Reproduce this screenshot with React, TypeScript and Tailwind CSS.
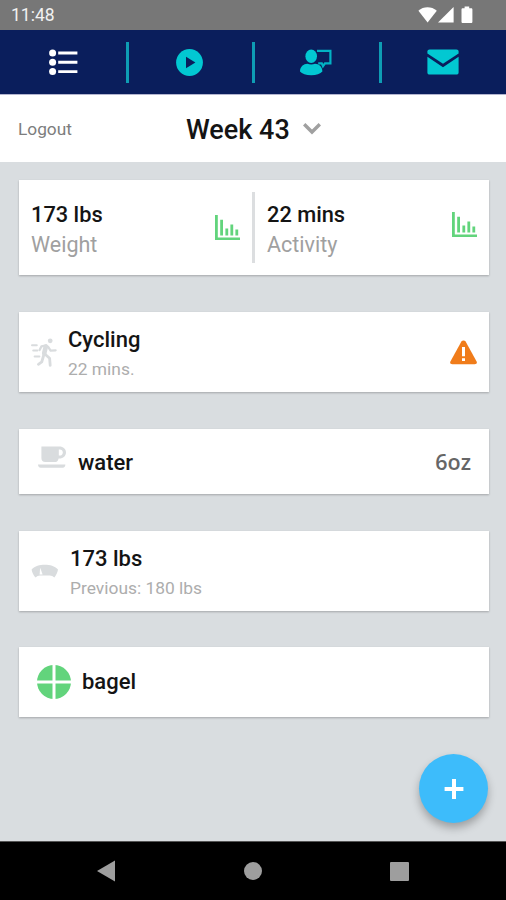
import type { ReactNode } from "react";

function BarChartIcon() {
  return (
    <svg width="26" height="26" viewBox="0 0 26 26" fill="#62d47c" aria-hidden="true">
      <path d="M0 0h2.8v22.4H25V25H0z" />
      <path d="M5.2 4.8H8V20.6H5.2zM10.4 13.4h2.8v7.2h-2.8zM15.4 9.4h2.8v11.2h-2.8zM20.4 14.4h2.8v6.2h-2.8z" />
    </svg>
  );
}

function RunnerIcon() {
  return (
    <svg width="26" height="29" viewBox="0 0 26 29" fill="none" stroke="#d9dcde" strokeWidth="2" strokeLinecap="round" strokeLinejoin="round" aria-hidden="true">
      <circle cx="19.2" cy="2.8" r="2.4" fill="#d9dcde" stroke="none" />
      <path d="M14.8 8.6l-1.6 6.8" strokeWidth="4.6" />
      <path d="M13.8 16l4.8 4.2.6 7.200" strokeWidth="2.800" />
      <path d="M12.600 17.500l-1.800 6.400-3.400 2.400" strokeWidth="2.800" />
      <path d="M15.400 7.400l-5 1-1.800 3.600M17 8.600l2.600 4 5-.2" strokeWidth="2.300" />
      <path d="M1 7.200h4.800M2.200 12.400h4.200M3.600 18.600h4.800" strokeWidth="2" />
    </svg>
  );
}

function CupIcon() {
  return (
    <svg width="29" height="23" viewBox="0 0 29 23" fill="#d9dcde" aria-hidden="true">
      <path d="M3.400.6h18c3.800 0 6.600 2.400 6.600 5.800s-2.800 6-6.600 6h-.8c-.4 2.400-1.800 3.600-4 3.600H7.400c-2.600 0-4-1.500-4-4z" />
      <path d="M20.800 3.400h.8c2 0 3.200 1.200 3.200 3s-1.200 3.200-3.200 3.200h-.8z" fill="#fff" />
      <path d="M0 18.600h27.400c0 2-1 3.200-2.600 3.200H2.600C1 21.800 0 20.600 0 18.600z" />
    </svg>
  );
}

function ScaleIcon() {
  return (
    <svg width="28" height="15" viewBox="0 0 28 15" aria-hidden="true">
      <path d="M.6 5.600C4 2 8.600.8 13.800.8S23.600 2 27 5.600c-.4 2.800-1.600 5.400-3.600 7.800-1.400-1-3-1.600-4.600-1.800H9c-1.600.2-3.200.8-4.600 1.800C2.200 11 1 8.400.6 5.600z" fill="#d9dcde" />
      <path d="M9.200 3.800l2.400 6.600H8.600z" fill="#fff" />
    </svg>
  );
}

function PieIcon() {
  return (
    <svg width="34" height="34" viewBox="0 0 34 34" aria-hidden="true">
      <circle cx="17" cy="17" r="17" fill="#62d47c" />
      <path d="M17 0v34M0 17h34" stroke="#fff" strokeWidth="3" />
    </svg>
  );
}

function WarningIcon() {
  return (
    <svg width="27" height="25" viewBox="0 0 27 25" aria-hidden="true">
      <path d="M11.400 1.500c.9-1.500 3.300-1.500 4.200 0l11 20c.8 1.500-.2 2.700-1.900 2.700h-22.400c-1.700 0-2.700-1.200-1.900-2.700z" fill="#f07c1a" />
      <path d="M12 7h3v9.200h-3zM12 18.300h3v2.800h-3z" fill="#fff" />
    </svg>
  );
}

function ListIcon() {
  return (
    <svg width="29" height="27" viewBox="0 0 29 27" fill="#fff" aria-hidden="true">
      <circle cx="3.600" cy="4" r="3.500" />
      <circle cx="3.600" cy="13.200" r="3.500" />
      <circle cx="3.600" cy="22.600" r="3.500" />
      <path d="M9.200 2.600h19.200v2.900H9.200zM9.200 11.800h19.200v2.900H9.200zM9.200 21.200h19.200v2.900H9.200z" />
    </svg>
  );
}

function PlayIcon() {
  return (
    <svg width="27" height="27" viewBox="0 0 27 27" aria-hidden="true">
      <circle cx="13.500" cy="13.500" r="13.400" fill="#02c8d2" />
      <path d="M10 7.800v11.400l9.400-5.700z" fill="#0a1e5c" />
    </svg>
  );
}

function CoachIcon() {
  return (
    <svg width="32" height="27" viewBox="0 0 32 27" fill="#02c8d2" aria-hidden="true">
      <ellipse cx="11.200" cy="7.200" rx="5.800" ry="6.800" />
      <path d="M0 22.400c0-4.600 3.600-7.600 7.400-7.600 2.400 1 5.200 1 7.600 0 3.800 0 7.400 3 7.400 7.600-2 2.400-6 3.800-11.200 3.800S2 24.800 0 22.400z" />
      <path d="M17 1.800h13.400v12.600H25l-2 2.800-1.200-2.800h-3.600" fill="none" stroke="#02b2c4" strokeWidth="2.200" />
    </svg>
  );
}

function MailIcon() {
  return (
    <svg width="32" height="26" viewBox="0 0 32 26" fill="#02c8d2" aria-hidden="true">
      <path d="M2.600.4h26.800c1.300 0 2.200.9 2.200 2.200v2L16 14.800.4 4.600v-2C.4 1.300 1.300.4 2.600.4z" />
      <path d="M.4 7.800L16 18.200 31.600 7.800v15.600c0 1.300-.9 2.200-2.200 2.200H2.600c-1.300 0-2.200-.9-2.200-2.200z" />
    </svg>
  );
}

function StatusIcons() {
  return (
    <svg width="56" height="18" viewBox="0 0 56 18" fill="#fff" aria-hidden="true">
      <path d="M.4 4.800C5.600.2 13.400.2 18.800 4.800L9.600 16.400z" />
      <path d="M35.600 1v15.600H20z" />
      <path d="M46.600.6h4.600v1.600h2c.7 0 1.200.5 1.200 1.200v12.400c0 .8-.5 1.300-1.200 1.300h-8.400c-.8 0-1.300-.5-1.300-1.300V3.400c0-.7.500-1.200 1.300-1.200h1.800z" />
    </svg>
  );
}

const tabs = [
  { label: "Log", icon: <ListIcon /> },
  { label: "Videos", icon: <PlayIcon /> },
  { label: "Coach", icon: <CoachIcon /> },
  { label: "Messages", icon: <MailIcon /> },
];

function Card({ className, children }: { className: string; children: ReactNode }) {
  return (
    <section className={`flex w-[470px] bg-white shadow-[0_1px_2px_rgba(0,0,0,0.25)] ${className}`}>{children}</section>
  );
}

function Stat({ value, label }: { value: string; label: string }) {
  return (
    <div className="flex-1">
      <p className="text-[21.8px] leading-[30px] font-medium text-[#141414]">{value}</p>
      <p className="text-[21.5px] leading-[29px] text-[#a0a0a0]">{label}</p>
    </div>
  );
}

export default function App() {
  return (
    <div className="flex h-[900px] w-[506px] flex-col overflow-hidden bg-[#d9dde0] font-[Roboto,sans-serif]">
      <div className="flex h-[30px] shrink-0 items-center justify-between bg-[#777] pr-8 pl-[11px]">
        <span className="text-[17.5px] text-[#f1f1f1]">11:48</span>
        <StatusIcons />
      </div>

      <nav className="grid h-[65px] shrink-0 grid-cols-4 border-b border-[#b3b5cf] bg-[#0a1e5c]">
        {tabs.map((tab, i) => (
          <div key={tab.label} className="flex items-center">
            <button type="button" aria-label={tab.label} className="flex flex-1 justify-center pl-px">
              {tab.icon}
            </button>
            {i < tabs.length - 1 && <span className="-mr-[2px] h-[41px] w-[3px] bg-[#0e9db4]" />}
          </div>
        ))}
      </nav>

      <header className="flex h-[67px] shrink-0 items-center bg-white pl-[18px]">
        <button type="button" className="w-[168px] pt-0.5 text-left text-[17.3px] text-[#7d7d7d]">
          Logout
        </button>
        <h1 className="w-[117px] pt-1 text-[27px] font-medium text-[#141414]">Week 43</h1>
        <svg width="18" height="12" viewBox="0 0 18 12" fill="none" stroke="#a0a0a0" strokeWidth="3.400" aria-hidden="true">
          <path d="M1.200 1.300L9 9l7.800-7.700" />
        </svg>
      </header>

      <main className="flex flex-1 flex-col pt-[18px] pl-[19px]">
        <Card className="h-[95px] items-center">
          <div className="flex w-[233px] items-center pt-[3px] pr-[11px] pl-3">
            <Stat value="173 lbs" label="Weight" />
            <div className="pb-[3px]">
              <BarChartIcon />
            </div>
          </div>
          <span className="h-[71px] w-[3px] bg-[#dcdee0]" />
          <div className="flex flex-1 items-center pt-[3px] pr-[11px] pl-3">
            <Stat value="22 mins" label="Activity" />
            <div className="pb-[8px]">
              <BarChartIcon />
            </div>
          </div>
        </Card>

        <Card className="mt-[37px] h-[80px] items-center pr-3 pl-3">
          <RunnerIcon />
          <div className="ml-[11px] flex-1 pt-1">
            <p className="text-[22px] leading-[30px] font-medium text-[#141414]">Cycling</p>
            <p className="text-[17.4px] leading-7 text-[#adadad]">22 mins.</p>
          </div>
          <WarningIcon />
        </Card>

        <Card className="mt-[37px] h-[65px] items-center pr-[18px] pl-[19px]">
          <div className="pb-2">
            <CupIcon />
          </div>
          <p className="ml-[11px] flex-1 pt-0.5 text-[22px] font-medium text-[#141414]">water</p>
          <span
            className="pt-0.5 font-[family-name:'Open_Sans',sans-serif] text-[21.5px] font-semibold text-[#666]"
          >
            6oz
          </span>
        </Card>

        <Card className="mt-[37px] h-[80px] items-center pl-3">
          <ScaleIcon />
          <div className="ml-[11px] pt-1">
            <p className="text-[22px] leading-[30px] font-medium text-[#141414]">173 lbs</p>
            <p className="text-[17.4px] leading-7 text-[#adadad]">Previous: 180 lbs</p>
          </div>
        </Card>

        <Card className="mt-[36px] h-[70px] items-center pl-[18px]">
          <PieIcon />
          <p className="ml-[11px] pb-0.5 text-[22px] font-medium text-[#141414]">bagel</p>
        </Card>

        <button
          type="button"
          aria-label="Add entry"
          className="mt-[37px] mr-[18px] flex size-[69px] items-center justify-center self-end rounded-full bg-[#3dbcfb] shadow-[0_5px_9px_rgba(0,0,0,0.28)]"
        >
          <svg width="20" height="20" viewBox="0 0 20 20" stroke="#fff" strokeWidth="4" aria-hidden="true">
            <path d="M10 0v20M.6 10h18.800" />
          </svg>
        </button>
      </main>

      <footer className="flex h-[59px] shrink-0 items-center justify-between border-t border-[#555] bg-black pr-[97px] pl-[97px]">
        <svg width="18" height="22" viewBox="0 0 18 22" fill="#9e9e9e" aria-hidden="true">
          <path d="M18 .6v20.800L0 11z" />
        </svg>
        <span className="size-[18px] rounded-full bg-[#9e9e9e]" />
        <span className="size-[19px] rounded-[1px] bg-[#9e9e9e]" />
      </footer>
    </div>
  );
}
